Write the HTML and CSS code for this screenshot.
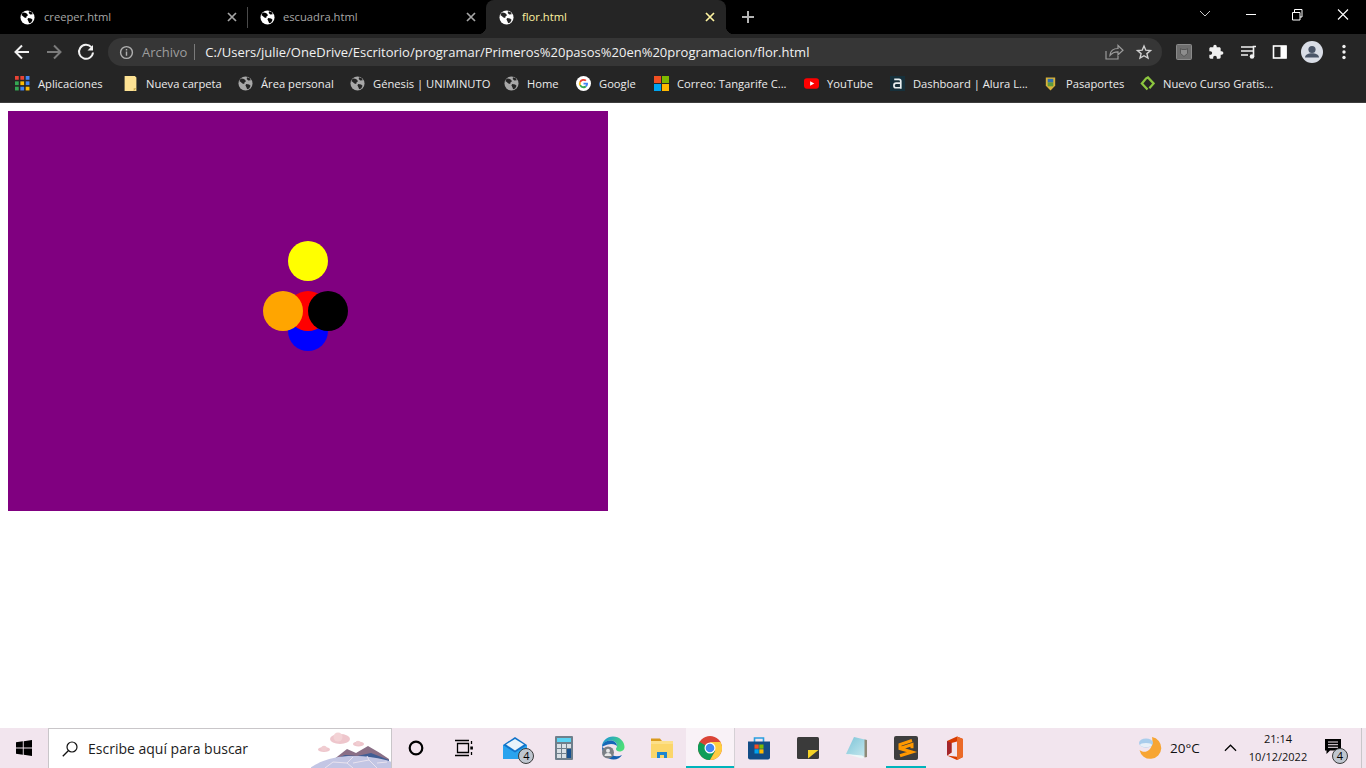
FILE: index.html
```html
<!DOCTYPE html>
<html lang="es">
<head>
<meta charset="utf-8">
<title>flor.html</title>
<link rel="stylesheet" href="styles.css">
</head>
<body>
<svg class="defs" width="0" height="0" aria-hidden="true">
  <defs>
    <linearGradient id="edge-top" x1="0" y1="0" x2="1" y2="0.400"><stop offset="0" stop-color="#1a90dc"/><stop offset="1" stop-color="#4bdc7a"/></linearGradient>
    <linearGradient id="pad" x1="0" y1="0" x2="1" y2="1"><stop offset="0" stop-color="#7cc4d8"/><stop offset="1" stop-color="#c9e9ee"/></linearGradient>
  </defs>
  <symbol id="globe" viewBox="0 0 16 16">
    <circle cx="8" cy="8" r="7.500" fill="currentColor"/>
    <path d="M3 2.600l2.600.2 1.900 1.300 1 1.600-1.600 1.100-.3 1.600-1.900-.4L2.600 6 1.600 5.600A7 7 0 0 1 3 2.600zM8.800 8.600l3 .4 1.600 1.500-1.400 2.700-2.200 1-1-2.400-.9-1.900zM9.600 1.400l3 1 1 2-2.700.3-1.600-1.600z" fill="var(--hole)"/>
  </symbol>
  <symbol id="close" viewBox="0 0 10 10"><path d="M1 1l8 8M9 1l-8 8" stroke="currentColor" stroke-width="1.700" fill="none"/></symbol>
</svg>

<header class="chrome">
  <div class="tabstrip">
    <div class="tab">
      <svg class="fav globe-dark"><use href="#globe"/></svg>
      <span class="tab-title">creeper.html</span>
      <svg class="tab-x"><use href="#close"/></svg>
    </div>
    <div class="tab tab-sep">
      <svg class="fav globe-dark"><use href="#globe"/></svg>
      <span class="tab-title">escuadra.html</span>
      <svg class="tab-x"><use href="#close"/></svg>
    </div>
    <div class="tab tab-active">
      <svg class="fav globe-active"><use href="#globe"/></svg>
      <span class="tab-title">flor.html</span>
      <svg class="tab-x"><use href="#close"/></svg>
    </div>
    <svg class="newtab" viewBox="0 0 14 14"><path d="M7 1v12M1 7h12" stroke="currentColor" stroke-width="2"/></svg>
    <div class="winbtns">
      <svg class="winbtn" viewBox="0 0 46 28"><path d="M18 11l5 5 5-5" stroke="#c8c8c8" fill="none"/></svg>
      <svg class="winbtn" viewBox="0 0 46 28"><path d="M18 14.500h10" stroke="#fff" fill="none"/></svg>
      <svg class="winbtn" viewBox="0 0 46 28"><path d="M18.500 12.500h7.500v7.500h-7.500zM20.500 12v-2.500h7.500v7.500h-2" stroke="#fff" fill="none"/></svg>
      <svg class="winbtn" viewBox="0 0 46 28"><path d="M18 9.500l10 10M28 9.500l-10 10" stroke="#fff" stroke-width="1.100" fill="none"/></svg>
    </div>
  </div>

  <div class="toolbar">
    <svg class="tool" viewBox="0 0 32 32"><path d="M23 16H10M16 9.500L9.500 16l6.500 6.500" stroke="#f1f1f1" stroke-width="2" fill="none"/></svg>
    <svg class="tool" viewBox="0 0 32 32"><path d="M9 16h13M16 9.500l6.500 6.500-6.500 6.500" stroke="#7b7b7b" stroke-width="2" fill="none"/></svg>
    <svg class="tool" viewBox="0 0 32 32"><path d="M21.300 11.200A7 7 0 1 0 23 16.500" stroke="#f1f1f1" stroke-width="2" fill="none"/><path d="M23 9v5.500h-5.500z" fill="#f1f1f1"/></svg>
    <div class="omnibox">
      <svg class="omni-info" viewBox="0 0 16 16"><circle cx="8" cy="8" r="6.300" stroke="#b0b0b0" stroke-width="1.500" fill="none"/><path d="M8 7v4.500M8 4.300v1.500" stroke="#b0b0b0" stroke-width="1.500"/></svg>
      <span class="omni-scheme">Archivo</span>
      <span class="omni-sep"></span>
      <span class="omni-url">C:/Users/julie/OneDrive/Escritorio/programar/Primeros%20pasos%20en%20programacion/flor.html</span>
      <svg class="tool" viewBox="0 0 32 32"><path d="M10 15v8h12v-3M14 19c.5-4 3.500-6.500 8-6.500V9.500l5 4.800-5 4.500v-3c-3.500 0-6 1-8 3.700z" stroke="#9b9b9b" stroke-width="1.200" fill="none"/></svg>
      <svg class="tool" viewBox="0 0 32 32"><path d="M16 10l1.800 4.200 4.700.4-3.600 3 1.100 4.500-4-2.400-4 2.400 1.100-4.500-3.600-3 4.700-.4z" stroke="#d0d0d0" stroke-width="1.400" fill="none"/></svg>
    </div>
    <svg class="tool" viewBox="0 0 32 32"><rect x="8.500" y="8.500" width="15" height="15" rx="1" fill="#6e6e6e" stroke="#8a8a8a"/><path d="M12.500 12.500l1.500 1h4l1.500-1v5l-3.500 3-3.500-3z" fill="#8d8d8d" stroke="#575757"/></svg>
    <svg class="tool" viewBox="-12 -12 48 48"><path fill="#f1f1f1" d="M20.500 11H19V7c0-1.100-.9-2-2-2h-4V3.500C13 2.120 11.880 1 10.500 1S8 2.120 8 3.500V5H4c-1.100 0-1.990.9-1.990 2v3.800H3.500c1.490 0 2.700 1.210 2.700 2.700s-1.210 2.700-2.700 2.700H2V20c0 1.100.9 2 2 2h3.800v-1.500c0-1.490 1.210-2.700 2.700-2.700 1.490 0 2.700 1.210 2.700 2.700V22H17c1.100 0 2-.9 2-2v-4h1.500c1.380 0 2.500-1.120 2.500-2.500S21.880 11 20.500 11z"/></svg>
    <svg class="tool" viewBox="0 0 32 32"><path d="M9 11h12M9 15h12M9 19h7" stroke="#f1f1f1" stroke-width="1.500"/><path d="M21.500 20.500V10.500h2.500" stroke="#f1f1f1" stroke-width="1.600" fill="none"/><circle cx="20" cy="20.500" r="2.300" fill="#f1f1f1"/></svg>
    <svg class="tool" viewBox="0 0 32 32"><rect x="9.500" y="10" width="12.500" height="12" fill="#252525" stroke="#fff" stroke-width="1.600"/><rect x="16.500" y="10" width="6" height="12" fill="#fff"/></svg>
    <svg class="tool" viewBox="0 0 32 32"><circle cx="16" cy="16" r="11" fill="#d9dde6"/><circle cx="16" cy="13.500" r="3.600" fill="#4a5568"/><path d="M9 21.500c0-3 4-4.300 7-4.300s7 1.300 7 4.300z" fill="#4a5568"/></svg>
    <svg class="tool" viewBox="0 0 32 32"><circle cx="16" cy="10.500" r="1.700" fill="#f1f1f1"/><circle cx="16" cy="16" r="1.700" fill="#f1f1f1"/><circle cx="16" cy="21.500" r="1.700" fill="#f1f1f1"/></svg>
  </div>

  <nav class="bookmarks">
    <a class="bm"><svg class="bm-ico" viewBox="0 0 14 14"><g><rect x="0" y="0" width="3.500" height="3.500" fill="#ea4335"/><rect x="5" y="0" width="3.500" height="3.500" fill="#ea4335"/><rect x="10" y="0" width="3.500" height="3.500" fill="#4285f4"/><rect x="0" y="5" width="3.500" height="3.500" fill="#34a853"/><rect x="5" y="5" width="3.500" height="3.500" fill="#fbbc05"/><rect x="10" y="5" width="3.500" height="3.500" fill="#4285f4"/><rect x="0" y="10" width="3.500" height="3.500" fill="#34a853"/><rect x="5" y="10" width="3.500" height="3.500" fill="#4285f4"/><rect x="10" y="10" width="3.500" height="3.500" fill="#fbbc05"/></g></svg>Aplicaciones</a>
    <a class="bm"><svg class="bm-ico" viewBox="0 0 14 14"><path d="M1.500 0h9.500l1.500 1.500V14h-11z" fill="#fde293"/><path d="M10 14v-2.500h2.500z" fill="#c9a94a"/></svg>Nueva carpeta</a>
    <a class="bm"><svg class="bm-ico globe-bm"><use href="#globe"/></svg>Área personal</a>
    <a class="bm"><svg class="bm-ico globe-bm"><use href="#globe"/></svg>Génesis | UNIMINUTO</a>
    <a class="bm"><svg class="bm-ico globe-bm"><use href="#globe"/></svg>Home</a>
    <a class="bm"><svg class="bm-ico" viewBox="0 0 16 16"><circle cx="8" cy="8" r="8" fill="#fff"/><path d="M12.800 8.100c0-.4 0-.7-.1-1H8v1.900h2.700a2.300 2.300 0 0 1-1 1.500l1.500 1.200c1-.9 1.600-2.100 1.600-3.600z" fill="#4285f4"/><path d="M8 13c1.300 0 2.400-.4 3.200-1.300l-1.500-1.200c-.4.300-1 .5-1.700.5-1.300 0-2.400-.9-2.800-2L3.600 10.200A5 5 0 0 0 8 13z" fill="#34a853"/><path d="M5.200 9a3 3 0 0 1 0-2L3.600 5.800a5 5 0 0 0 0 4.400z" fill="#fbbc05"/><path d="M8 5c.7 0 1.400.3 1.900.7l1.400-1.400A5 5 0 0 0 3.600 5.800L5.200 7c.4-1.100 1.500-2 2.800-2z" fill="#ea4335"/></svg>Google</a>
    <a class="bm"><svg class="bm-ico" viewBox="0 0 16 16"><rect width="7.500" height="7.500" fill="#f25022"/><rect x="8.500" width="7.500" height="7.500" fill="#7fba00"/><rect y="8.500" width="7.500" height="7.500" fill="#00a4ef"/><rect x="8.500" y="8.500" width="7.500" height="7.500" fill="#ffb900"/></svg>Correo: Tangarife C...</a>
    <a class="bm"><svg class="bm-ico" viewBox="0 0 16 16"><rect y="2.500" width="16" height="11" rx="3" fill="#f00"/><path d="M6.500 5.500v5L11 8z" fill="#fff"/></svg>YouTube</a>
    <a class="bm"><svg class="bm-ico" viewBox="0 0 16 16"><rect width="16" height="16" fill="#16303b"/><path d="M4.500 3.500h5c1.200 0 2 .8 2 2v8M11.500 7.500H6.500C5 7.500 4.200 8.500 4.200 10s.8 2.500 2.300 2.500h5" stroke="#e8eef0" stroke-width="1.800" fill="none"/></svg>Dashboard | Alura L...</a>
    <a class="bm"><svg class="bm-ico" viewBox="0 0 16 16"><path d="M3 1.500h10v9L8 15.500l-5-5z" fill="#d8b23a"/><rect x="5" y="3" width="6" height="4" fill="#2e6fb0"/><rect x="5" y="7" width="6" height="4" fill="#5c9a3c"/></svg>Pasaportes</a>
    <a class="bm"><svg class="bm-ico" viewBox="0 0 16 16"><path d="M6.500 2.500L2 8l6 6.500M6 3L8.500 1.500 14.500 8 10 13" stroke="#8cc63f" stroke-width="2.400" fill="none"/></svg>Nuevo Curso Gratis...</a>
  </nav>
</header>

<main class="page">
  <svg class="stage" viewBox="0 0 600 400" width="600" height="400">
    <rect width="600" height="400" fill="#800080"/>
    <circle cx="300" cy="150" r="20" fill="#ffff00"/>
    <circle cx="300" cy="220" r="20" fill="#0000ff"/>
    <circle cx="300" cy="200" r="20" fill="#ff0000"/>
    <circle cx="275" cy="200" r="20" fill="#ffa500"/>
    <circle cx="320" cy="200" r="20" fill="#000000"/>
  </svg>
</main>

<footer class="taskbar">
  <div class="start"><svg class="start-ico" viewBox="0 0 16 16"><path d="M0 2.300l6.800-1v6.300H0zM7.700 1.200L16 0v7.600H7.700zM0 8.400h6.800v6.300l-6.800-1zM7.700 8.400H16V16l-8.300-1.200z" fill="#000"/></svg></div>
  <div class="search">
    <svg class="search-ico" viewBox="0 0 16 16"><circle cx="10" cy="6" r="5" stroke="#111" stroke-width="1.200" fill="none"/><path d="M6.300 9.700L.8 15.300" stroke="#111" stroke-width="1.300"/></svg>
    <span class="search-text">Escribe aquí para buscar</span>
    <svg class="search-art" viewBox="0 0 80 38">
      <ellipse cx="29" cy="9" rx="10" ry="5" fill="#eec6cc"/><circle cx="27" cy="7" r="4.500" fill="#f3d3d6"/>
      <ellipse cx="47.500" cy="14" rx="5.500" ry="2.500" fill="#eec6cc"/><circle cx="47" cy="13" r="2.300" fill="#f0cdd1"/>
      <ellipse cx="13" cy="19.500" rx="6" ry="2.500" fill="#eec6cc"/><circle cx="13" cy="18.500" r="2.800" fill="#f0cdd1"/>
      <path d="M22 30l14-11 9 4 12-7 12 7 9 6v6H22z" fill="#8a6f86"/>
      <path d="M22 30l12-5 12 1 14-3 18 7v6H22z" fill="#3f5d94"/>
      <path d="M-1 38C10 30 26 26 42 26c14 0 28 2 39 6v6z" fill="#c3c6e4"/>
      <path d="M14 38l8-6 14 1 6-6M36 33l6 5M42 33l16-3 8 8M58 30l-2-4M66 33l10-1" stroke="#e9e3ef" fill="none"/>
    </svg>
  </div>
  <div class="tb-btn tb-wide"><svg class="tb-ico" viewBox="0 0 24 24"><circle cx="12" cy="12" r="6.300" stroke="#000" stroke-width="2.200" fill="none"/></svg></div>
  <div class="tb-btn tb-wide tb-end"><svg class="tb-ico" viewBox="0 0 24 24"><path d="M5.500 7.500h11v9h-11zM3 4.500h14M3 19.500h14" stroke="#000" stroke-width="1.300" fill="none"/><path d="M19.500 5v3M19.500 16v3" stroke="#000" stroke-width="1.300"/><rect x="18.300" y="10.500" width="2.600" height="3" fill="#000"/></svg></div>

  <div class="tb-btn">
    <svg class="app" viewBox="0 0 24 24"><path d="M0 9L12 1l12 8v14H0z" fill="#1173c9"/><path d="M3 8.500L12 3l9 5.500-9 6z" fill="#e9f3fb"/><path d="M0 9l12 7.500L24 9v14H0z" fill="#29a3ee"/></svg>
    <span class="badge badge-mail">4</span>
  </div>
  <div class="tb-btn"><svg class="app" viewBox="0 0 24 24"><rect x="3" width="18" height="24" rx="1" fill="#6f7f8b"/><rect x="5" y="2" width="14" height="4" fill="#5bd3f3"/><g fill="#d9e0e5"><rect x="5" y="8" width="4" height="4"/><rect x="10" y="8" width="4" height="4"/><rect x="15" y="8" width="4" height="4"/><rect x="5" y="13" width="4" height="4"/><rect x="10" y="13" width="4" height="4"/><rect x="5" y="18" width="4" height="4"/><rect x="10" y="18" width="4" height="4"/></g><rect x="15" y="13" width="4" height="9" fill="#17518f"/></svg></div>
  <div class="tb-btn"><svg class="app" viewBox="0 0 24 24"><path d="M1 11C1 5 6 .5 12 .5c6.500 0 11.500 5 11.500 10.500 0 3-2.500 4.500-5 4.500-2 0-3.500-1-3.500-2.500 0-1 1-1.500 1-3.500C16 6.500 13 4.500 9.500 4.500 5 4.500 1.500 7.500 1 11z" fill="url(#edge-top)"/><path d="M1 11c0-3.500 3.500-6.500 8.500-6.500 4 0 6.500 2.500 6.500 5.500 0 0-2-2-6-2S1 11 1 11z" fill="#1468b8"/><path d="M1 11c0 7 5 12.500 11.500 12.500 4 0 7-2 8.500-4.500-5 2.500-11 1-12.500-3.500L1 11z" fill="#155fb0"/><circle cx="7" cy="16.500" r="6" fill="#7b7f85"/><circle cx="7" cy="14.800" r="2" fill="#e8e8e8"/><path d="M3.500 20c0-2 1.500-3 3.500-3s3.500 1 3.500 3z" fill="#e8e8e8"/></svg></div>
  <div class="tb-btn"><svg class="app" viewBox="0 0 24 24"><path d="M1 2.500h9l2 2.500H1z" fill="#d99a1c"/><rect x="1" y="5" width="22" height="17" fill="#fbd66a"/><path d="M1 5h22v3H1z" fill="#fce08a"/><path d="M7 22v-6h10v6h-3v-3h-4v3z" fill="#1f86d0"/></svg></div>
  <div class="tb-btn tb-active">
    <svg class="app" viewBox="0 0 24 24"><circle cx="12" cy="12" r="12" fill="#db4437"/><path d="M12 12L1.600 6A12 12 0 0 0 12 24l5.200-9z" fill="#0f9d58"/><path d="M12 6h10.400A12 12 0 0 1 12 24l5.200-9z" fill="#ffcd40"/><circle cx="12" cy="12" r="5.500" fill="#fff"/><circle cx="12" cy="12" r="4.300" fill="#4285f4"/></svg>
  </div>
  <div class="tb-btn"><svg class="app" viewBox="0 0 24 24"><path d="M7.500 6V2h9v4" stroke="#2a9fe0" stroke-width="1.600" fill="none"/><path d="M1 5.500h22v16a2 2 0 0 1-2 2H3a2 2 0 0 1-2-2z" fill="#124c86"/><rect x="7.500" y="8.500" width="4.200" height="4.200" fill="#f25022"/><rect x="12.300" y="8.500" width="4.200" height="4.200" fill="#7fba00"/><rect x="7.500" y="13.300" width="4.200" height="4.200" fill="#00a4ef"/><rect x="12.300" y="13.300" width="4.200" height="4.200" fill="#ffb900"/></svg></div>
  <div class="tb-btn"><svg class="app" viewBox="0 0 24 24"><rect x="1" y="1" width="22" height="22" rx="1.500" fill="#3a3a3a"/><path d="M12 22.500V14h10.500z" fill="#f5d327"/></svg></div>
  <div class="tb-btn"><svg class="app" viewBox="0 0 24 24"><path d="M9 1l13 3v17L1 18z" fill="url(#pad)"/><path d="M19.500 3.400L22 4v17l-2.500.5z" fill="#8f8a78"/><path d="M1 18l16 4.500 2.500-1-2.500-2z" fill="#eef7f8"/></svg></div>
  <div class="tb-btn tb-active tb-short"><svg class="app" viewBox="0 0 24 24"><rect width="24" height="24" rx="2" fill="#3e3e3e"/><path d="M18 4.500L6 8.500v4l12 3.500-12 3.800M6 12.500l12-4v3.700" stroke="#ff9800" stroke-width="3" fill="none"/></svg></div>
  <div class="tb-btn"><svg class="app" viewBox="0 0 24 24"><path d="M4 5l10-4.500 6 2.500v18l-6 3L4 19.500l10 1.300V5.500L8.500 7v9.500L4 19.500z" fill="#d83b01"/><path d="M14 .5l6 2.500v18l-6 3z" fill="#eb6a28"/><path d="M4 5l4.500 2v9.500L4 19.500z" fill="#a4262c"/></svg></div>

  <div class="tray">
    <svg class="weather" viewBox="0 0 24 24"><path d="M14 1a11 11 0 1 1-12.500 13c3 2.500 7 2.500 10-.5 2.500-2.500 3.500-8 2.500-12.500z" fill="#f7a533"/><ellipse cx="8" cy="7" rx="7" ry="4.500" fill="#a9cdec"/><ellipse cx="8" cy="9" rx="6" ry="2" fill="#e8f0f8"/></svg>
    <span class="temp">20°C</span>
    <svg class="caret" viewBox="0 0 14 8"><path d="M1 7l6-6 6 6" stroke="#000" stroke-width="1.300" fill="none"/></svg>
    <div class="clock"><span>21:14</span><span>10/12/2022</span></div>
    <div class="notif">
      <svg class="notif-ico" viewBox="0 0 16 16"><path d="M0 0h16v11.500H5L1.500 15v-3.500H0z" fill="#000"/><path d="M3 3h10M3 5.700h10M3 8.300h10" stroke="#f3e6ee" stroke-width="1"/></svg>
      <span class="badge badge-notif">4</span>
    </div>
    <span class="desk"></span>
  </div>
</footer>
</body>
</html>
```
FILE: styles.css
```css
* { box-sizing: border-box; }
html, body { margin: 0; padding: 0; height: 100%; }
body {
  width: 1366px;
  height: 768px;
  overflow: hidden;
  display: flex;
  flex-direction: column;
  background: #fff;
  font-family: "Open Sans", "Noto Sans", sans-serif;
}
.defs { position: absolute; }
svg { display: block; flex: none; }

.chrome { height: 103px; background: #252525; border-bottom: 1px solid #3d3d3d; flex: none; }

.tabstrip { height: 34px; background: #000; display: flex; align-items: stretch; }
.tab {
  position: relative;
  width: 239px;
  padding: 0 9px 0 12px;
  display: flex;
  align-items: center;
  font-size: 11.200px;
  color: #a6a6a6;
}
.tab:first-child { width: 247px; padding-left: 20px; }
.tab-sep { border-left: 1px solid #4a4a4a; border-image: linear-gradient(#000 8px, #4a4a4a 8px, #4a4a4a 27px, #000 27px) 1; }
.tab-active {
  width: 240px;
  padding-left: 13px;
  background: #252525;
  color: #fdf3a0;
  border-radius: 8px 8px 0 0;
}
.tab-active::before, .tab-active::after {
  content: "";
  position: absolute;
  bottom: 0;
  width: 8px;
  height: 8px;
}
.tab-active::before { left: -8px; background: radial-gradient(circle at 0 0, #000 8px, #252525 8.500px); }
.tab-active::after { right: -8px; background: radial-gradient(circle at 100% 0, #000 8px, #252525 8.500px); }
.fav { width: 15px; height: 15px; margin-right: 8px; color: #fff; --hole: #000; }
.tab:first-child .fav { margin-right: 9px; }
.globe-active { --hole: #252525; }
.tab-title { flex: 1; white-space: nowrap; margin-bottom: 2px; }
.tab-x { width: 10px; height: 10px; color: #a6a6a6; margin-right: 1px; }
.tab-active .tab-x { color: #fdf3a0; margin-right: 2px; }
.newtab { width: 14px; height: 14px; color: #b4b4b4; margin: 10px 0 0 15px; }
.winbtns { margin-left: auto; display: flex; }
.winbtn { width: 46px; height: 28px; }

.toolbar { height: 34px; display: flex; align-items: center; padding: 2px 6px 0; }
.tool { width: 32px; height: 32px; }
.omnibox {
  flex: 1;
  height: 28px;
  margin: 0 6px;
  padding: 0 2px 0 11px;
  border-radius: 14px;
  background: #363636;
  display: flex;
  align-items: center;
}
.omni-info { width: 15px; height: 15px; margin-right: 8px; }
.omni-scheme { font-size: 13px; color: #9d9d9d; }
.omni-sep { width: 1px; height: 16px; background: #7a7a7a; margin: 0 10px 0 7px; }
.omni-url { flex: 1; font-size: 13px; color: #f1f1f1; white-space: nowrap; }

.bookmarks {
  height: 34px;
  padding: 0 0 3px 15px;
  display: grid;
  grid-template-columns: 108px 115px 112px 154px 72px 78px 150px 86px 153px 97px auto;
  align-items: center;
  font-size: 11.200px;
  color: #ececec;
}
.bm { display: flex; align-items: center; white-space: nowrap; }
.bm-ico { width: 15px; height: 15px; margin-right: 8px; }
.globe-bm { color: #a8a8a8; --hole: #252525; }

.page { flex: 1; padding: 8px; background: #fff; }
.stage { display: block; }

.taskbar {
  height: 40px;
  flex: none;
  background: #f2e5ee;
  display: flex;
  align-items: stretch;
}
.start { width: 48px; display: flex; align-items: center; justify-content: center; }
.start-ico { width: 16px; height: 16px; }
.search {
  width: 344px;
  background: #fff;
  border: 1px solid #c9c6c9;
  border-bottom: 0;
  display: flex;
  align-items: center;
  padding-left: 13px;
  position: relative;
  overflow: hidden;
}
.search-ico { width: 16px; height: 16px; margin-right: 10px; }
.search-text { font-size: 14px; color: #1c1c1c; white-space: nowrap; }
.search-art { position: absolute; right: 0; bottom: 0; width: 80px; height: 38px; }

.tb-btn {
  width: 48.900px;
  display: flex;
  align-items: center;
  justify-content: center;
  position: relative;
}
.tb-wide { width: 48px; }
.tb-end { margin-right: 2.500px; }
.tb-ico { width: 24px; height: 24px; }
.app { width: 24px; height: 24px; }
.tb-active::after {
  content: "";
  position: absolute;
  left: 0;
  right: 0;
  bottom: 0;
  height: 2px;
  background: #00b4bc;
}
.tb-btn.tb-active:not(.tb-short) { background: #f9f2f7; border-right: 1px solid #d5d0d5; }
.tb-short::after { left: 4px; right: 5px; }

.badge {
  position: absolute;
  width: 16px;
  height: 16px;
  border-radius: 50%;
  background: #bfc6cf;
  border: 1px solid #3a3a3a;
  color: #000;
  font-size: 11px;
  line-height: 14px;
  text-align: center;
}
.badge-mail { right: 5px; bottom: 4px; }

.tray { margin-left: auto; display: flex; align-items: center; }
.weather { width: 24px; height: 24px; }
.temp { font-size: 13.500px; color: #111; margin-left: 8px; width: 54px; }
.caret { width: 13px; height: 8px; margin-right: 6px; }
.clock {
  width: 70px;
  display: flex;
  flex-direction: column;
  align-items: center;
  font-size: 11px;
  line-height: 18px;
  color: #111;
}
.notif { position: relative; width: 40px; height: 40px; margin-right: 8px; display: flex; align-items: center; justify-content: center; }
.notif-ico { width: 16px; height: 16px; margin-bottom: 3px; }
.badge-notif { right: 5px; bottom: 4px; }
.desk { width: 5px; height: 40px; border-left: 1px solid #c9c6c9; }
```
